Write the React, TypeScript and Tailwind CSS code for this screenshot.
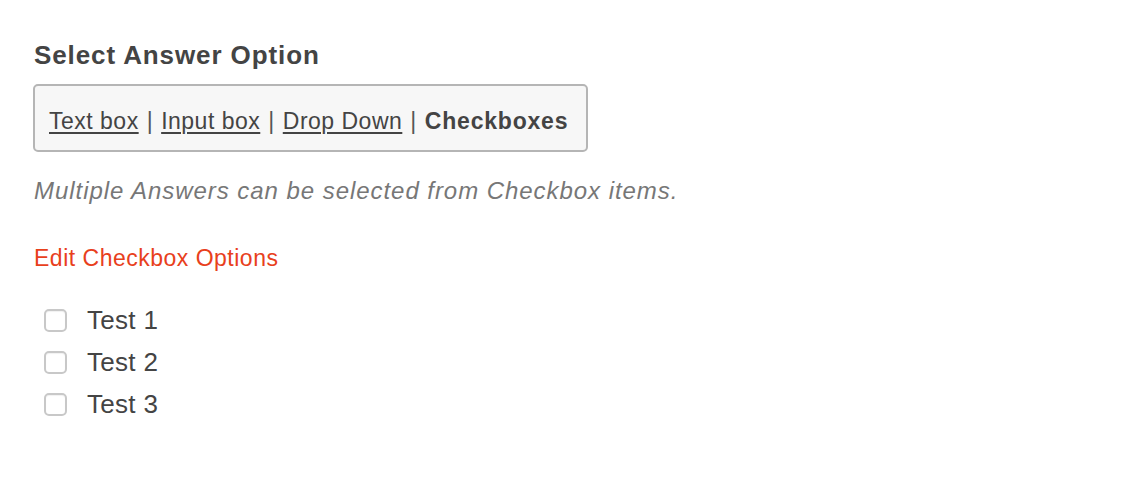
import React from 'react';

const options = ['Test 1', 'Test 2', 'Test 3'];

const App = () => {
    return (
        <div className="min-h-[488px] bg-white px-[34px] pt-[40px] text-[#444] font-['Liberation_Sans',Arial,sans-serif]">
            {/* Heading */}
            <h2 className="text-[26px] font-bold leading-[30px] tracking-[0.9px]">Select Answer Option</h2>

            {/* Answer type switcher */}
            <div className="mt-[14px] w-[555px] h-[68px] -ml-px flex items-center rounded-[5px] border-2 border-[#b5b5b5] bg-[#f7f7f7] px-[14px] pt-[6px] text-[23px] tracking-[0.5px]">
                <a href="#" className="underline underline-offset-[3px]">Text box</a>
                <span className="mx-[8px] text-[#555]">|</span>
                <a href="#" className="underline underline-offset-[3px]">Input box</a>
                <span className="mx-[8px] text-[#555]">|</span>
                <a href="#" className="underline underline-offset-[3px]">Drop Down</a>
                <span className="mx-[8px] text-[#555]">|</span>
                <span className="font-bold tracking-[0.8px]">Checkboxes</span>
            </div>

            <p className="mt-[22px] text-[24px] leading-[33px] italic tracking-[0.95px] text-[#777]">Multiple Answers can be selected from Checkbox items.</p>

            <a href="#" className="mt-[35px] block text-[23px] leading-[33px] tracking-[0.5px] text-[#e8401c]">Edit Checkbox Options</a>

            {/* Checkbox list */}
            <div className="mt-[24px] flex flex-col">
                {options.map((o) => (
                    <label key={o} className="flex h-[42px] items-center">
                        <span className="ml-[10px] h-[23px] w-[23px] rounded-[5px] border-2 border-[#c8c8c8] bg-white shadow-[inset_0_1px_1px_rgba(0,0,0,0.06)]" />
                        <span className="ml-[20px] text-[26px] tracking-[0.3px]">{o}</span>
                    </label>
                ))}
            </div>
        </div>
    );
};

export default App;
